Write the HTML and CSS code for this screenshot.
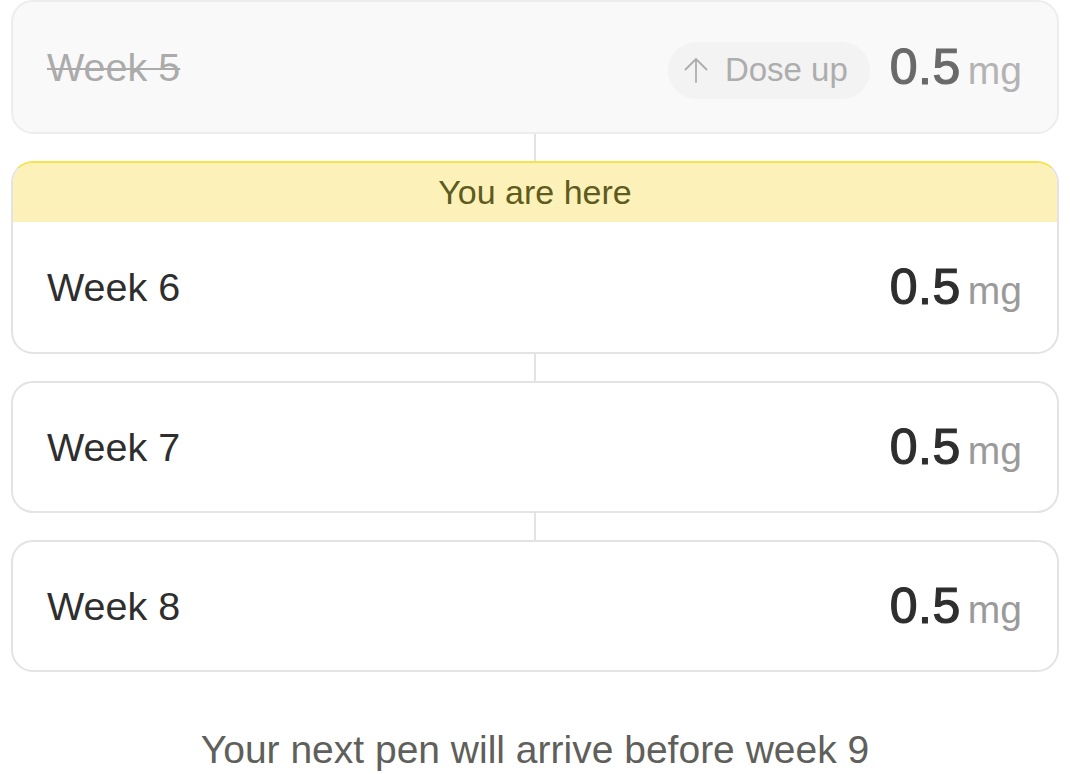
FILE: index.html
```html
<!DOCTYPE html>
<html lang="en">
<head>
    <meta charset="UTF-8">
    <meta name="viewport" content="width=device-width, initial-scale=1.0">
    <title>Dose schedule</title>
    <link rel="stylesheet" href="styles.css">
</head>
<body>
    <div class="schedule">
        <div class="week-card done">
            <div class="week-row">
                <span class="week-label">Week 5</span>
                <div class="dose">
                    <span class="dose-up">
                        <svg class="arrow" viewBox="0 0 24 26" width="24" height="26">
                            <path d="M12 25V2M1.5 12.5L12 2l10.5 10.5" fill="none" stroke="currentColor" stroke-width="1.8" stroke-linecap="round" stroke-linejoin="round"/>
                        </svg>
                        Dose up
                    </span>
                    <span class="amount">0.5</span>
                    <span class="unit">mg</span>
                </div>
            </div>
        </div>
        <div class="connector"></div>
        <div class="week-card current">
            <div class="here">You are here</div>
            <div class="week-row">
                <span class="week-label">Week 6</span>
                <div class="dose">
                    <span class="amount">0.5</span>
                    <span class="unit">mg</span>
                </div>
            </div>
        </div>
        <div class="connector"></div>
        <div class="week-card">
            <div class="week-row">
                <span class="week-label">Week 7</span>
                <div class="dose">
                    <span class="amount">0.5</span>
                    <span class="unit">mg</span>
                </div>
            </div>
        </div>
        <div class="connector"></div>
        <div class="week-card">
            <div class="week-row">
                <span class="week-label">Week 8</span>
                <div class="dose">
                    <span class="amount">0.5</span>
                    <span class="unit">mg</span>
                </div>
            </div>
        </div>
    </div>

    <p class="next-pen">Your next pen will arrive before week 9</p>
</body>
</html>
```

FILE: styles.css
```css
:root {
    --text-color: #2e2e2e;
    --muted-color: #9a9a9a;
    --border-color: #e3e3e3;
    --here-background: #fcf2b9;
    --here-border: #f7e24c;
    --here-text: #5f5a1d;
}

* {
    margin: 0;
    padding: 0;
    box-sizing: border-box;
}

body {
    background-color: #ffffff;
    color: var(--text-color);
    font-family: 'Liberation Sans', Arial, sans-serif;
    padding: 0 11px;
}

.schedule {
    display: flex;
    flex-direction: column;
}

.week-card {
    border: 2px solid var(--border-color);
    border-radius: 22px;
    background-color: #ffffff;
    overflow: hidden;
}

.week-row {
    height: 128px;
    display: flex;
    align-items: center;
    justify-content: space-between;
    padding: 0 35px 0 34px;
}

.week-label {
    font-size: 39.5px;
}

.dose {
    display: flex;
    align-items: baseline;
    gap: 7px;
}

.amount {
    font-size: 50px;
    letter-spacing: 0.5px;
    -webkit-text-stroke: 1.2px currentColor;
}

.unit {
    font-size: 39px;
    color: var(--muted-color);
}

.connector {
    width: 2px;
    height: 27px;
    background-color: var(--border-color);
    align-self: center;
}

/* past week */
.week-card.done {
    background-color: #f9f9f9;
    border-color: #ededed;
}

.week-card.done .week-row {
    height: 130px;
}

.week-card.done .week-label {
    color: #ababab;
    text-decoration: line-through;
    text-decoration-thickness: 2px;
}

.week-card.done .amount {
    color: #6a6a6a;
}

.week-card.done .unit {
    color: #b3b3b3;
}

.dose-up {
    align-self: center;
    display: flex;
    align-items: center;
    gap: 17px;
    height: 57px;
    padding: 0 22px 0 16px;
    margin: 3px 13px -3px 0;
    border-radius: 29px;
    background-color: #f3f3f3;
    color: #adadad;
    font-size: 33px;
}

.arrow {
    width: 24px;
    height: 26px;
}

/* current week */
.week-card.current {
    border-top-color: var(--here-border);
}

.here {
    height: 59px;
    background-color: var(--here-background);
    color: var(--here-text);
    font-size: 34px;
    display: flex;
    align-items: center;
    justify-content: center;
}

.week-card.current .week-row {
    height: 130px;
}

.next-pen {
    margin-top: 56px;
    text-align: center;
    font-size: 39px;
    color: #5f5f5b;
}
```
